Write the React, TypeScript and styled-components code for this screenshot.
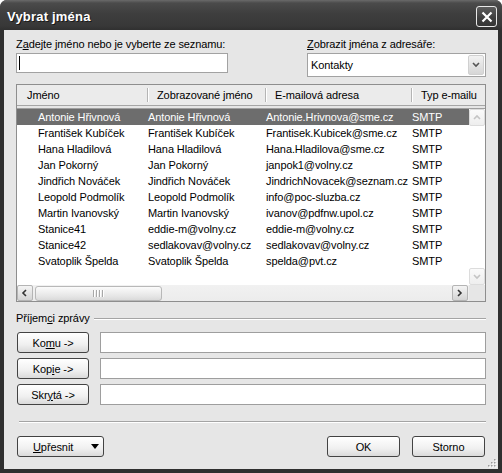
import React from "react";
import styled, { createGlobalStyle } from "styled-components";

const GlobalStyle = createGlobalStyle`
  html, body { margin: 0; padding: 0; background: #ffffff; }
  body {
    font-family: "Liberation Sans", Arial, sans-serif;
    font-size: 11px;
    letter-spacing: -0.1px;
    color: #000;
  }
  * { box-sizing: border-box; }
`;

const Window = styled.div`
  width: 502px;
  height: 473px;
  display: flex;
  flex-direction: column;
  background: #2f2f2f;
  border-radius: 7px 7px 0 0;
  overflow: hidden;
`;

const TitleBar = styled.div`
  height: 30px;
  flex: none;
  display: flex;
  align-items: center;
  justify-content: space-between;
  padding: 0 5px 0 7px;
  background: linear-gradient(180deg, #6a6a6a 0%, #4b4b4b 10%, #3e3e3e 45%, #383838 85%, #303030 100%);
`;

const Title = styled.div`
  color: #fff;
  font-weight: bold;
  font-size: 13px;
  letter-spacing: 0.2px;
  text-shadow: 1px 1px 0 #1a1a1a;
  margin-top: 2px;
`;

const CloseButton = styled.div`
  width: 21px;
  height: 21px;
  margin-top: 3px;
  border: 1px solid #e8e8e8;
  border-radius: 3px;
  background: linear-gradient(180deg, #5c5c5c, #3e3e3e 60%, #353535);
  display: flex;
  align-items: center;
  justify-content: center;
`;

const Body = styled.div`
  position: relative;
  flex: 1;
  margin: 0 4px 4px;
  background: #e6e6e6;
  padding: 8px 12px 0 12px;
  display: flex;
  flex-direction: column;
`;

const TopRow = styled.div`
  display: flex;
  justify-content: space-between;
`;

const Field = styled.div<{ $w: number }>`
  width: ${(p) => p.$w}px;
  display: flex;
  flex-direction: column;
  gap: 2px;
`;

const Label = styled.div`
  line-height: 13px;
  white-space: nowrap;
`;

const Key = styled.span`
  text-decoration: underline;
  text-underline-offset: 1px;
`;

const TextBox = styled.div`
  height: 20px;
  background: #fff;
  border: 1px solid #a2a2a2;
  display: flex;
  align-items: center;
  padding-left: 2px;
`;

const Caret = styled.div`
  width: 1px;
  height: 14px;
  background: #000;
`;

const Select = styled.div`
  height: 24px;
  background: #fff;
  border: 1px solid #a2a2a2;
  display: flex;
  align-items: center;
  padding: 0 1px 0 3px;
`;

const DropButton = styled.div`
  margin-left: auto;
  width: 16px;
  height: 20px;
  border: 1px solid #d0d0d0;
  border-radius: 2px;
  background: linear-gradient(180deg, #f2f2f2, #d6d6d6);
  display: flex;
  align-items: center;
  justify-content: center;
`;

const ListFrame = styled.div`
  margin-top: 7px;
  height: 218px;
  border: 1px solid #8e8e8e;
  display: flex;
  flex-direction: column;
`;

const Header = styled.div`
  height: 21px;
  display: flex;
  background: #ebebeb;
  border-bottom: 1px solid #a6a6a6;
`;

const HeaderCell = styled.div<{ $w?: number; $first?: boolean }>`
  position: relative;
  ${(p) => (p.$w ? `width: ${p.$w}px;` : "flex: 1;")}
  padding-left: 10px;
  line-height: 20px;
  white-space: nowrap;
  overflow: hidden;
  &::before {
    content: "";
    display: ${(p) => (p.$first ? "none" : "block")};
    position: absolute;
    left: 0;
    top: 3px;
    height: 14px;
    border-left: 1px solid #b4b4b4;
    border-right: 1px solid #fff;
  }
`;

const ListBody = styled.div`
  margin-top: 2px;
  border-top: 1px solid #a0a0a0;
  flex: 1;
  display: grid;
  grid-template-columns: 1fr 16px;
  grid-template-rows: 1fr 16px;
`;

const Rows = styled.div`
  background: #fff;
  overflow: hidden;
`;

const Row = styled.div<{ $selected?: boolean }>`
  display: flex;
  height: 16px;
  line-height: 16px;
  white-space: nowrap;
  background: ${(p) => (p.$selected ? "#6d6d6d" : "transparent")};
  color: ${(p) => (p.$selected ? "#fff" : "#000")};
`;

const Cell = styled.div<{ $w?: number; $indent?: number }>`
  ${(p) => (p.$w ? `width: ${p.$w}px;` : "flex: 1;")}
  padding-left: ${(p) => p.$indent ?? 1}px;
  overflow: hidden;
`;

const VScroll = styled.div`
  background: #fff;
  display: flex;
  flex-direction: column;
  justify-content: space-between;
`;

const ScrollButton = styled.div<{ $disabled?: boolean; $h?: number }>`
  width: 16px;
  height: ${(p) => p.$h ?? 17}px;
  border: 1px solid ${(p) => (p.$disabled ? "#dcdcdc" : "#b4b4b4")};
  border-radius: 2px;
  background: ${(p) =>
    p.$disabled ? "linear-gradient(180deg, #fafafa, #eeeeee)" : "linear-gradient(180deg, #f4f4f4, #d4d4d4)"};
  display: flex;
  align-items: center;
  justify-content: center;
  flex: none;
`;

const HScroll = styled.div`
  display: flex;
  align-items: center;
  background: linear-gradient(180deg, #f1f1f1, #ececec);
  padding-right: 1px;
`;

const Thumb = styled.div`
  margin-left: 2px;
  width: 127px;
  height: 15px;
  border: 1px solid #b8b8b8;
  border-radius: 3px;
  background: linear-gradient(180deg, #fbfbfb, #e6e6e6 70%, #dadada);
  display: flex;
  align-items: center;
  justify-content: center;
  gap: 1px;
`;

const Grip = styled.div`
  width: 1px;
  height: 7px;
  background: #a8a8a8;
  box-shadow: 1px 0 0 #fff;
  margin-right: 1px;
`;

const Corner = styled.div`
  background: #e6e6e6;
`;

const GroupHeader = styled.div`
  margin-top: 10px;
  display: flex;
  align-items: center;
  gap: 4px;
  line-height: 13px;
`;

const EtchedLine = styled.div`
  flex: 1;
  border-top: 1px solid #a4a4a4;
  border-bottom: 1px solid #fff;
`;

const RecipientList = styled.div`
  margin-top: 7px;
  display: flex;
  flex-direction: column;
  gap: 5px;
`;

const RecipientRow = styled.div`
  display: flex;
  align-items: center;
  gap: 11px;
`;

const Button = styled.div<{ $w: number }>`
  width: ${(p) => p.$w}px;
  height: 21px;
  margin-left: 1px;
  border: 1px solid #434343;
  border-radius: 3px;
  background: linear-gradient(180deg, #ffffff, #f0f0f0 60%, #dadada);
  display: flex;
  align-items: center;
  justify-content: center;
  flex: none;
`;

const SplitButton = styled(Button)`
  justify-content: space-between;
  padding: 0 4px 0 15px;
`;

const Triangle = styled.div`
  width: 0;
  height: 0;
  border-left: 4px solid transparent;
  border-right: 4px solid transparent;
  border-top: 5px solid #000;
`;

const RecipientField = styled.div`
  flex: 1;
  height: 21px;
  background: #fff;
  border: 1px solid #9e9e9e;
`;

const Separator = styled.div`
  margin: 16px 0 0 3px;
  border-top: 1px solid #a4a4a4;
  border-bottom: 1px solid #fff;
`;

const Footer = styled.div`
  margin-top: 13px;
  display: flex;
  align-items: center;
  gap: 11px;
  padding-right: 1px;
`;

const Spacer = styled.div`
  flex: 1;
`;

const SizeGrip = styled.svg`
  position: absolute;
  right: 1px;
  bottom: 1px;
`;

type Contact = { name: string; display: string; email: string };

const contacts: Contact[] = [
  { name: "Antonie Hřivnová", display: "Antonie Hřivnová", email: "Antonie.Hrivnova@sme.cz" },
  { name: "František Kubíček", display: "František Kubíček", email: "Frantisek.Kubicek@sme.cz" },
  { name: "Hana Hladilová", display: "Hana Hladilová", email: "Hana.Hladilova@sme.cz" },
  { name: "Jan Pokorný", display: "Jan Pokorný", email: "janpok1@volny.cz" },
  { name: "Jindřich Nováček", display: "Jindřich Nováček", email: "JindrichNovacek@seznam.cz" },
  { name: "Leopold Podmolík", display: "Leopold Podmolík", email: "info@poc-sluzba.cz" },
  { name: "Martin Ivanovský", display: "Martin Ivanovský", email: "ivanov@pdfnw.upol.cz" },
  { name: "Stanice41", display: "eddie-m@volny.cz", email: "eddie-m@volny.cz" },
  { name: "Stanice42", display: "sedlakovav@volny.cz", email: "sedlakovav@volny.cz" },
  { name: "Svatoplik Špelda", display: "Svatoplik Špelda", email: "spelda@pvt.cz" },
];

const Chevron = ({ dir, color }: { dir: "up" | "down" | "left" | "right"; color: string }) => {
  const d = {
    up: "M1 5 L4 2 L7 5",
    down: "M1 2 L4 5 L7 2",
    left: "M5 1 L2 4 L5 7",
    right: "M2 1 L5 4 L2 7",
  }[dir];
  return (
    <svg width="8" height="8" viewBox="0 0 8 8">
      <path d={d} fill="none" stroke={color} strokeWidth="1.6" />
    </svg>
  );
};

const recipients = [
  { key: "komu", label: <>Ko<Key>m</Key>u -&gt;</> },
  { key: "kopie", label: <>Kop<Key>i</Key>e -&gt;</> },
  { key: "skryta", label: <>Skr<Key>y</Key>tá -&gt;</> },
];

export default function App() {
  return (
    <>
      <GlobalStyle />
      <Window>
        <TitleBar>
          <Title>Vybrat jména</Title>
          <CloseButton>
            <svg width="12" height="12" viewBox="0 0 12 12">
              <path d="M1.5 1.5 L10.5 10.5 M10.5 1.5 L1.5 10.5" stroke="#fff" strokeWidth="2.2" />
            </svg>
          </CloseButton>
        </TitleBar>
        <Body>
          <TopRow>
            <Field $w={212}>
              <Label>
                Z<Key>a</Key>dejte jméno nebo je vyberte ze seznamu:
              </Label>
              <TextBox>
                <Caret />
              </TextBox>
            </Field>
            <Field $w={179}>
              <Label>
                <Key>Z</Key>obrazit jména z adresáře:
              </Label>
              <Select>
                Kontakty
                <DropButton>
                  <Chevron dir="down" color="#555" />
                </DropButton>
              </Select>
            </Field>
          </TopRow>

          <ListFrame>
            <Header>
              <HeaderCell $w={130} $first>Jméno</HeaderCell>
              <HeaderCell $w={118}>Zobrazované jméno</HeaderCell>
              <HeaderCell $w={146}>E-mailová adresa</HeaderCell>
              <HeaderCell>Typ e-mailu</HeaderCell>
            </Header>
            <ListBody>
              <Rows>
                {contacts.map((c, i) => (
                  <Row key={c.name} $selected={i === 0}>
                    <Cell $w={130} $indent={21}>{c.name}</Cell>
                    <Cell $w={118}>{c.display}</Cell>
                    <Cell $w={146}>{c.email}</Cell>
                    <Cell>SMTP</Cell>
                  </Row>
                ))}
              </Rows>
              <VScroll>
                <ScrollButton $disabled>
                  <Chevron dir="up" color="#c4c4c4" />
                </ScrollButton>
                <ScrollButton $disabled>
                  <Chevron dir="down" color="#c4c4c4" />
                </ScrollButton>
              </VScroll>
              <HScroll>
                <ScrollButton $h={16}>
                  <Chevron dir="left" color="#333" />
                </ScrollButton>
                <Thumb>
                  <Grip />
                  <Grip />
                  <Grip />
                  <Grip />
                </Thumb>
                <Spacer />
                <ScrollButton $h={16}>
                  <Chevron dir="right" color="#333" />
                </ScrollButton>
              </HScroll>
              <Corner />
            </ListBody>
          </ListFrame>

          <GroupHeader>
            <Label>
              Příjem<Key>c</Key>i zprávy
            </Label>
            <EtchedLine />
          </GroupHeader>
          <RecipientList>
            {recipients.map((r) => (
              <RecipientRow key={r.key}>
                <Button $w={72}>{r.label}</Button>
                <RecipientField />
              </RecipientRow>
            ))}
          </RecipientList>

          <Separator />

          <Footer>
            <SplitButton $w={87}>
              <span>
                <Key>U</Key>přesnit
              </span>
              <Triangle />
            </SplitButton>
            <Spacer />
            <Button $w={73}>OK</Button>
            <Button $w={73}>Storno</Button>
          </Footer>

          <SizeGrip width="10" height="10" viewBox="0 0 10 10">
            {[
              [8, 2],
              [8, 5],
              [5, 5],
              [8, 8],
              [5, 8],
              [2, 8],
            ].map(([x, y]) => (
              <g key={`${x}-${y}`}>
                <rect x={x} y={y} width="1.5" height="1.5" fill="#fff" />
                <rect x={x - 1} y={y - 1} width="1.5" height="1.5" fill="#9a9a9a" />
              </g>
            ))}
          </SizeGrip>
        </Body>
      </Window>
    </>
  );
}
